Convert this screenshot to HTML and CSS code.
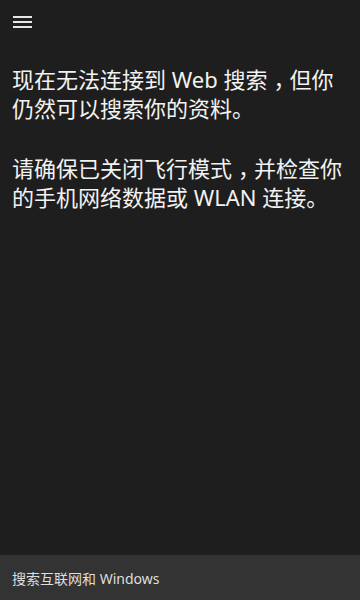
FILE: index.html
```html
<!DOCTYPE html>
<html lang="zh-CN">
  <head>
    <meta charset="UTF-8" />
    <title>搜索</title>
    <link rel="stylesheet" href="styles.css">
  </head>
  <body>
    <div class="screen">
      <div class="header">
        <button class="menu-button" aria-label="菜单">
          <span></span>
          <span></span>
          <span></span>
        </button>
      </div>

      <div class="message">
        <p>现在无法连接到 Web 搜索<span class="comma">，</span>但你<br>仍然可以搜索你的资料。</p>
        <p>请确保已关闭飞行模式<span class="comma">，</span>并检查你<br>的手机网络数据或 WLAN 连接。</p>
      </div>

      <div class="search-bar">搜索互联网和 Windows</div>
    </div>
  </body>
</html>
```

FILE: styles.css
```css
html,
body {
  margin: 0;
  padding: 0;
  height: 100%;
}

body {
  font-family: "Noto Sans", "Noto Sans CJK SC", sans-serif;
  background-color: #1e1e1e;
  color: #f2f2f2;
}

.screen {
  display: flex;
  flex-direction: column;
  height: 100%;
}

.header {
  height: 48px;
  display: flex;
  align-items: flex-start;
}

.menu-button {
  display: flex;
  flex-direction: column;
  gap: 3px;
  background: none;
  border: none;
  padding: 16px 13px;
  margin: 0;
  cursor: pointer;
}

.menu-button span {
  display: block;
  width: 19px;
  height: 2px;
  background-color: #e6e6e6;
}

.message {
  flex: 1;
  padding: 17px 12px 0;
}

.message p {
  margin: 0 0 31px;
  font-size: 22px;
  line-height: 29px;
}

/* the system font sets the comma in the middle of its box */
.comma {
  padding-left: 6px;
  letter-spacing: -6px;
}

.search-bar {
  height: 45px;
  display: flex;
  align-items: center;
  padding: 0 12px;
  background-color: #333333;
  color: #dedede;
  font-size: 14px;
}
```
